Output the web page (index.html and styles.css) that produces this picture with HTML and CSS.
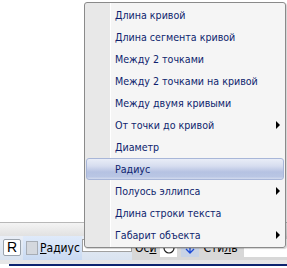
FILE: index.html
```html
<!DOCTYPE html>
<html>
<head>
<meta charset="utf-8">
<link rel="stylesheet" href="styles.css">
</head>
<body>
<div class="canvas">
  <div class="top-space"></div>
  <div class="panel">
    <div class="row">
      <div class="rbox">R</div>
      <div class="label-area">
        <span class="check"></span>
        <span class="lbl"><u>Р</u>адиус</span>
      </div>
      <div class="field wide"></div>
      <div class="gray-area">
        <span class="txt">Ос<u>и</u></span>
        <span class="circle-btn"><svg width="14" height="14" viewBox="0 0 14 14"><circle cx="7" cy="7" r="5" fill="none" stroke="#222" stroke-width="1.2"/></svg></span>
        <span class="arrow-btn"><svg width="12" height="14" viewBox="0 0 12 14"><path d="M6 1v11M2 8l4 4 4-4" fill="none" stroke="#1c4ad6" stroke-width="1.3"/></svg></span>
        <span class="txt">Сти<u>л</u>ь</span>
        <div class="field end"></div>
      </div>
    </div>
  </div>
  <div class="navy-line"></div>
</div>

<ul class="menu">
  <li class="item">Длина кривой</li>
  <li class="item">Длина сегмента кривой</li>
  <li class="item">Между 2 точками</li>
  <li class="item">Между 2 точками на кривой</li>
  <li class="item">Между двумя кривыми</li>
  <li class="item sub">От точки до кривой<span class="arr"></span></li>
  <li class="item">Диаметр</li>
  <li class="item active">Радиус</li>
  <li class="item sub">Полуось эллипса<span class="arr"></span></li>
  <li class="item">Длина строки текста</li>
  <li class="item sub">Габарит объекта<span class="arr"></span></li>
</ul>
</body>
</html>
```

FILE: styles.css
```css
html, body {
  margin: 0;
  padding: 0;
  background: #ffffff;
}
body {
  width: 287px;
  height: 268px;
  overflow: hidden;
  position: relative;
  font-family: "DejaVu Sans Condensed", "Liberation Sans", Arial, sans-serif;
  font-size: 10.6px;
}
.canvas {
  display: flex;
  flex-direction: column;
}
.top-space {
  height: 222px;
  background: #ffffff;
}
.panel {
  height: 42px;
  border-top: 1px solid #b8b8b8;
  background: linear-gradient(#f4f4f4, #e2e2e2 30%, #e6e6e6);
  box-sizing: border-box;
  padding-top: 13px;
}
.row {
  display: flex;
  align-items: flex-start;
  height: 24px;
  background: linear-gradient(#e9eef6, #d9e3f0);
}
.rbox {
  margin: 3px 0 0 3px;
  width: 18px;
  height: 17px;
  box-sizing: border-box;
  background: #ffffff;
  border: 1px solid #9aa3ad;
  border-radius: 2px;
  font-family: "Liberation Sans", Arial, sans-serif;
  font-size: 14px;
  line-height: 15px;
  text-align: center;
  color: #000;
}
.label-area {
  margin-left: 2px;
  width: 59px;
  height: 24px;
  display: flex;
  align-items: center;
  background: linear-gradient(#dfeafa, #c9daf2);
}
.check {
  margin-left: 3px;
  width: 12px;
  height: 14px;
  box-sizing: border-box;
  background: #d4d8de;
  border: 1px solid #a7adb5;
}
.lbl {
  margin-left: 2px;
  color: #000;
  font-size: 12px;
}
.field {
  background: #ffffff;
  border: 1px solid #a0a0a0;
  box-sizing: border-box;
}
.field.wide {
  margin-top: 3px;
  width: 50px;
  height: 13px;
}
.gray-area {
  flex: 1;
  height: 24px;
  display: flex;
  align-items: center;
  background: #d8d8d8;
  padding-left: 3px;
}
.txt {
  color: #000;
  font-size: 12px;
}
.circle-btn {
  margin-left: 4px;
  width: 17px;
  height: 18px;
  background: #fff;
  display: flex;
  align-items: center;
  justify-content: center;
}
.arrow-btn {
  margin-left: 4px;
  width: 18px;
  height: 18px;
  background: #c8d3e6;
  display: flex;
  align-items: center;
  justify-content: center;
  margin-right: 4px;
}
.field.end {
  margin-left: 6px;
  flex: 1;
  height: 18px;
  border: none;
}
.navy-line {
  height: 2px;
  margin-left: 9px;
  background: #0c2470;
}

/* popup menu */
.menu {
  position: absolute;
  left: 84px;
  top: 2px;
  width: 202px;
  margin: 0;
  padding: 1px 1px;
  list-style: none;
  box-sizing: border-box;
  border: 1px solid #8a8a8a;
  border-radius: 3px;
  background: linear-gradient(90deg, #e8e8e8 0, #e8e8e8 25px, #ffffff 25px, #ffffff 26px, #f5f5f5 26px);
  box-shadow: 1px 1px 1px rgba(0,0,0,0.18);
}
.item {
  height: 22px;
  display: flex;
  align-items: center;
  justify-content: space-between;
  padding: 0 4px 0 29px;
  color: #0e1f6e;
  box-sizing: border-box;
  white-space: nowrap;
}
.item.active {
  border: 1px solid #a8b6d8;
  border-radius: 3px;
  padding-left: 28px;
  padding-right: 3px;
  background: linear-gradient(#e9edf7 0%, #d6ddef 35%, #b5c2e2 65%, #b9c6e4 88%, #d3dbee 100%);
}
.arr {
  width: 0;
  height: 0;
  border-left: 4px solid #000;
  border-top: 4px solid transparent;
  border-bottom: 4px solid transparent;
}
```
